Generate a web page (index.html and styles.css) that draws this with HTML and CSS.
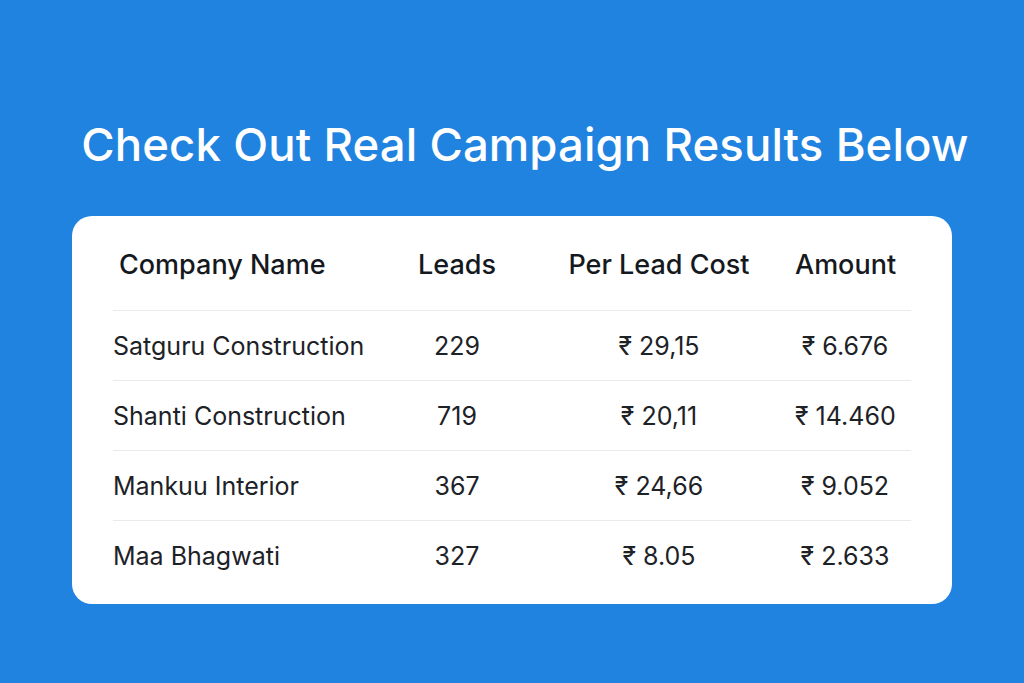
FILE: index.html
```html
<!DOCTYPE html>
<html lang="en">
<head>
	<meta charset="UTF-8">
	<title>Campaign Results</title>
	<link rel="stylesheet" href="styles.css">
</head>
<body>
	<div class="page">
		<h1 class="title">Check Out Real Campaign Results Below</h1>
		<div class="card">
			<div class="row head">
				<div class="name">Company Name</div>
				<div class="num">Leads</div>
				<div class="num">Per Lead Cost</div>
				<div class="num">Amount</div>
			</div>
			<div class="row">
				<div class="name">Satguru Construction</div>
				<div class="num">229</div>
				<div class="num">₹ 29,15</div>
				<div class="num">₹ 6.676</div>
			</div>
			<div class="row">
				<div class="name">Shanti Construction</div>
				<div class="num">719</div>
				<div class="num">₹ 20,11</div>
				<div class="num">₹ 14.460</div>
			</div>
			<div class="row">
				<div class="name">Mankuu Interior</div>
				<div class="num">367</div>
				<div class="num">₹ 24,66</div>
				<div class="num">₹ 9.052</div>
			</div>
			<div class="row last">
				<div class="name">Maa Bhagwati</div>
				<div class="num">327</div>
				<div class="num">₹ 8.05</div>
				<div class="num">₹ 2.633</div>
			</div>
		</div>
	</div>
</body>
</html>
```

FILE: styles.css
```css
*{
	padding: 0;
	margin: 0;
	box-sizing: border-box;
}
body{
	background: #2183e0;
	font-family: Inter, "Noto Sans", sans-serif;
	color: #1d2227;
	height: 683px;
	overflow: hidden;
}
.page{
	display: flex;
	flex-direction: column;
	align-items: center;
	padding-top: 113px;
}
.title{
	color: #fff;
	font-size: 45.5px;
	font-weight: 500;
	line-height: 64px;
	margin-left: 26px;
	letter-spacing: 0.1px;
}
.card{
	margin-top: 39px;
	width: 880px;
	background: #fff;
	border-radius: 20px;
	padding: 0 41px 13px;
}
.row{
	display: grid;
	grid-template-columns: 278px 132px 272px 100px;
	align-items: center;
	height: 70px;
	font-size: 25px;
	border-bottom: 1px solid #e9ebee;
}
.row.head{
	height: 95px;
	padding-top: 3px;
	font-size: 27px;
	font-weight: 500;
	color: #15191e;
}
.row.last{
	border-bottom: none;
}
.head .name{
	padding-left: 6px;
}
.num{
	text-align: center;
	white-space: nowrap;
}
```
